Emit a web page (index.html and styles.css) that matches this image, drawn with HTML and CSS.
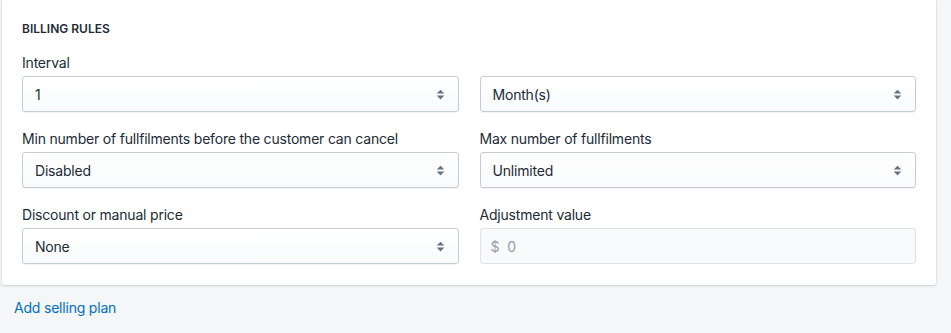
FILE: index.html
```html
<!DOCTYPE html>
<html lang="en">
<head>
  <meta charset="UTF-8">
  <meta name="viewport" content="width=device-width, initial-scale=1.0">
  <title>Billing rules</title>
  <link rel="stylesheet" href="styles.css">
</head>
<body>
  <div class="card">
    <h3 class="card-title">Billing rules</h3>
    <div class="form-grid">
      <div class="field">
        <label>Interval</label>
        <div class="select">
          <span>1</span>
          <svg class="arrows" width="10" height="12" viewBox="0 0 10 12"><path d="M5 1.5L8.5 5H1.5z M5 10.5L8.5 7H1.5z" fill="#637381"/></svg>
        </div>
      </div>
      <div class="field">
        <label class="blank">&nbsp;</label>
        <div class="select">
          <span>Month(s)</span>
          <svg class="arrows" width="10" height="12" viewBox="0 0 10 12"><path d="M5 1.5L8.5 5H1.5z M5 10.5L8.5 7H1.5z" fill="#637381"/></svg>
        </div>
      </div>
      <div class="field">
        <label>Min number of fullfilments before the customer can cancel</label>
        <div class="select">
          <span>Disabled</span>
          <svg class="arrows" width="10" height="12" viewBox="0 0 10 12"><path d="M5 1.5L8.5 5H1.5z M5 10.5L8.5 7H1.5z" fill="#637381"/></svg>
        </div>
      </div>
      <div class="field">
        <label>Max number of fullfilments</label>
        <div class="select">
          <span>Unlimited</span>
          <svg class="arrows" width="10" height="12" viewBox="0 0 10 12"><path d="M5 1.5L8.5 5H1.5z M5 10.5L8.5 7H1.5z" fill="#637381"/></svg>
        </div>
      </div>
      <div class="field">
        <label>Discount or manual price</label>
        <div class="select">
          <span>None</span>
          <svg class="arrows" width="10" height="12" viewBox="0 0 10 12"><path d="M5 1.5L8.5 5H1.5z M5 10.5L8.5 7H1.5z" fill="#637381"/></svg>
        </div>
      </div>
      <div class="field">
        <label>Adjustment value</label>
        <div class="input disabled">
          <span class="prefix">$</span>
          <span>0</span>
        </div>
      </div>
    </div>
  </div>
  <a href="#" class="add-link">Add selling plan</a>
</body>
</html>
```

FILE: styles.css
```css
body {
  margin: 0;
  padding: 0 15px 0 2px;
  background-color: #f4f6f8;
  font-family: Inter, "Noto Sans", sans-serif;
  font-size: 14px;
  letter-spacing: -0.2px;
  color: #212b36;
}

.card {
  background-color: #fff;
  border-radius: 0 0 3px 3px;
  box-shadow: 0 0 0 1px rgba(63, 63, 68, 0.05), 0 1px 3px 0 rgba(63, 63, 68, 0.15);
  padding: 21px 20px 21px;
}

.card-title {
  margin: 0 0 16px;
  font-size: 12px;
  font-weight: 600;
  line-height: 16px;
  letter-spacing: 0;
  text-transform: uppercase;
}

.form-grid {
  display: grid;
  grid-template-columns: 1fr 1fr;
  column-gap: 21px;
  row-gap: 17px;
}

.field label {
  display: block;
  line-height: 20px;
  margin-bottom: 3px;
}

.select,
.input {
  display: flex;
  align-items: center;
  height: 36px;
  box-sizing: border-box;
  padding: 0 12px 0 12px;
  border: 1px solid #c4cdd5;
  border-radius: 3px;
  background: linear-gradient(#fff, #f9fafb);
  box-shadow: 0 1px 0 0 rgba(22, 29, 37, 0.05);
}

.select span {
  flex: 1;
}

.arrows {
  width: 11px;
  height: 13px;
}

.input.disabled {
  background: #f9fafb;
  border-color: #dfe3e8;
  box-shadow: none;
  color: #919eab;
  padding-left: 10px;
}

.prefix {
  margin-right: 8px;
}

.add-link {
  display: inline-block;
  margin: 13px 0 0 12px;
  color: #006fbb;
  text-decoration: none;
  line-height: 20px;
}
```
